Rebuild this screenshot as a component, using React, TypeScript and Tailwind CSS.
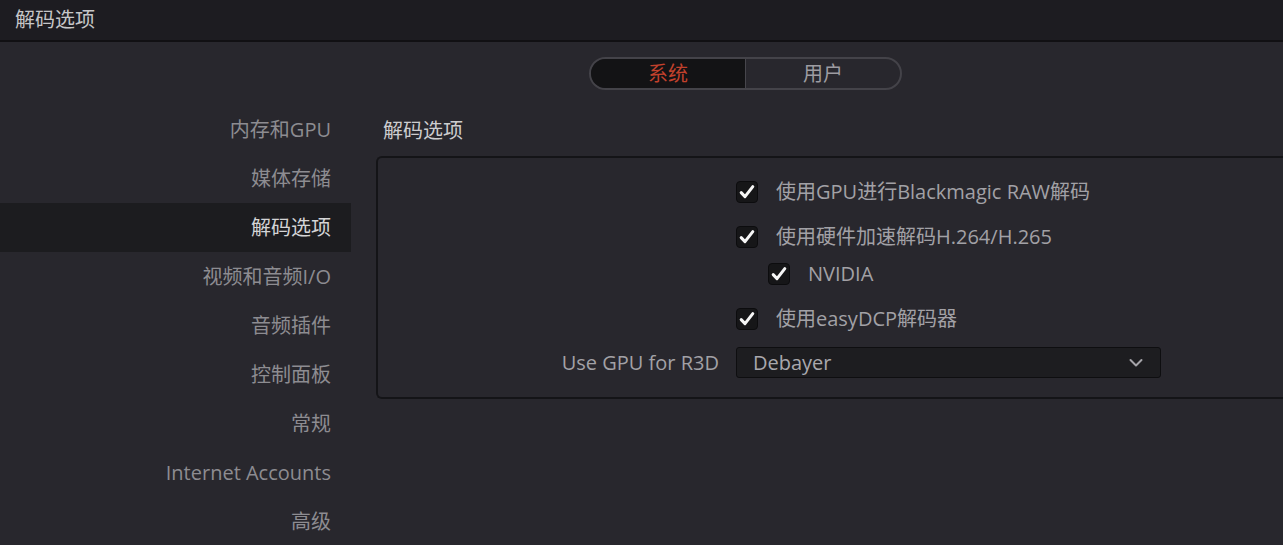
import React from 'react';

const font = { fontFamily: '"Open Sans", "Noto Sans CJK SC", sans-serif' };

const navItems = ['内存和GPU', '媒体存储', '解码选项', '视频和音频I/O', '音频插件', '控制面板', '常规', 'Internet Accounts', '高级'];

const Check: React.FC = () => (
  <div className="w-[22px] h-[22px] rounded-[4px] bg-[#161618] border border-[#0c0c0e] flex items-center justify-center shrink-0">
    <svg width="18" height="18" viewBox="0 0 18 18">
      <path d="M3.2 9.6 L7 13.6 L14.8 3.6" fill="none" stroke="#f6f6f6" strokeWidth="3" strokeLinecap="round" strokeLinejoin="round" />
    </svg>
  </div>
);

const CheckRow: React.FC<{ label: string; indent?: boolean }> = ({ label, indent }) => (
  <div className="flex items-center h-[22px]">
    <div className="w-[358px] shrink-0" />
    <div className={`flex items-center ${indent ? 'pl-[32px]' : ''}`}>
      <Check />
      <span className="ml-[18px] text-[20px] leading-none text-[#a2a1a6] whitespace-nowrap">{label}</span>
    </div>
  </div>
);

const App: React.FC = () => {
  return (
    <div className="w-[1283px] h-[545px] overflow-hidden bg-[#28272d]" style={font}>
      <div className="h-[42px] bg-[#1d1c21] border-b-2 border-[#111013] flex items-center pl-[15px]">
        <span className="text-[20px] text-[#c6c6c8]">解码选项</span>
      </div>

      <div className="pt-[15px] pl-[589px]">
        <div className="flex w-[313px] h-[33px] rounded-full border-2 border-[#444349] overflow-hidden">
          <div className="w-[155px] h-full bg-[#131315] flex items-center justify-center text-[20px] text-[#c2412c] border-r border-[#47464c]">系统</div>
          <div className="flex-1 h-full flex items-center justify-center text-[20px] text-[#9d9ca1]">用户</div>
        </div>
      </div>

      <div className="flex mt-[15px]">
        <div className="w-[351px] shrink-0">
          {navItems.map((item) => (
            <div
              key={item}
              className={`h-[49px] flex items-center justify-end pr-[20px] text-[20px] ${
                item === '解码选项' ? 'bg-[#1c1c1f] text-[#d4d4d6]' : 'text-[#8d8c91]'
              }`}
            >
              {item}
            </div>
          ))}
        </div>

        <div className="flex-1 ml-[25px]">
          <div className="pt-[12px] pl-[7px] h-[51px] text-[20px] text-[#cdcdcf] leading-[28px]">解码选项</div>
          <div className="h-[243px] border-2 border-r-0 border-[#141417] rounded-tl-[6px] rounded-bl-[6px] pt-[23px]">
            <div className="flex flex-col">
              <CheckRow label="使用GPU进行Blackmagic RAW解码" />
              <div className="mt-[23px]"><CheckRow label="使用硬件加速解码H.264/H.265" /></div>
              <div className="mt-[15px]"><CheckRow label="NVIDIA" indent /></div>
              <div className="mt-[23px]"><CheckRow label="使用easyDCP解码器" /></div>
              <div className="mt-[17px] flex items-center">
                <div className="w-[358px] shrink-0 flex justify-end pr-[17px]">
                  <span className="text-[20px] text-[#a2a1a6] whitespace-nowrap">Use GPU for R3D</span>
                </div>
                <div className="w-[425px] h-[31px] bg-[#1d1d20] border border-[#0e0e10] rounded-[3px] flex items-center justify-between pl-[16px] pr-[17px]">
                  <span className="text-[20px] text-[#a9a8ad]">Debayer</span>
                  <svg width="14" height="10" viewBox="0 0 14 10">
                    <path d="M1.5 2 L7 7.5 L12.5 2" fill="none" stroke="#a5a4a9" strokeWidth="2" strokeLinecap="round" strokeLinejoin="round" />
                  </svg>
                </div>
              </div>
            </div>
          </div>
        </div>
      </div>
    </div>
  );
};

export default App;
